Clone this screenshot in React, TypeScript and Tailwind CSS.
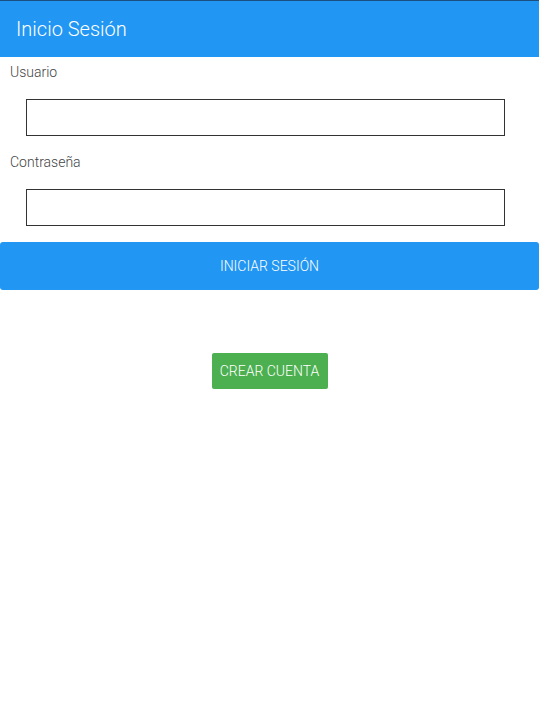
export default function App() {
  return (
    <div className="w-[539px] h-[718px] bg-white" style={{ fontFamily: "Roboto, 'Liberation Sans', sans-serif" }}>
      <div className="h-[57px] bg-[#2196f3] border-t border-[#1b4f80] flex items-center pl-[16px]">
        <span className="text-white text-[20px] font-light leading-none">Inicio Sesión</span>
      </div>
      <div className="pl-[10px] pt-[7px] text-[14px] font-light text-[#444] leading-[16px]">Usuario</div>
      <div className="px-[26px] pt-[19px] pr-[34px]">
        <input className="block w-full h-[37px] border border-[#333] outline-none" />
      </div>
      <div className="pl-[10px] pt-[18px] text-[14px] font-light text-[#444] leading-[16px]">Contraseña</div>
      <div className="px-[26px] pt-[19px] pr-[34px]">
        <input type="password" className="block w-full h-[37px] border border-[#333] outline-none" />
      </div>
      <div className="pt-[16px]">
        <button className="w-full h-[48px] rounded-[3px] bg-[#2196f3] text-white text-[14px] font-light">INICIAR SESIÓN</button>
      </div>
      <div className="flex justify-center pt-[63px]">
        <button className="w-[116px] h-[36px] rounded-[2px] bg-[#4caf50] text-white text-[14px] font-light">CREAR CUENTA</button>
      </div>
    </div>
  );
}
